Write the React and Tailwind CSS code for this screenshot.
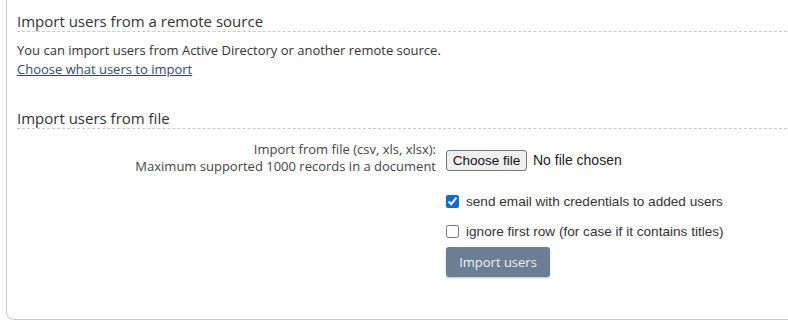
import React, { useState } from "react";

const App = () => {
  const [sendEmail, setSendEmail] = useState(true);
  const [ignoreFirst, setIgnoreFirst] = useState(false);
  const [fileName, setFileName] = useState("");

  return (
    <div
      className="h-[330px] w-[788px] overflow-hidden bg-white text-[#333]"
      style={{ fontFamily: '"Open Sans", sans-serif' }}
    >
      <div className="ml-[6px] mr-[-20px] mt-[-10px] h-[330px] rounded-b-[8px] border border-[#c8c8c8] pl-[10px] pt-[20px]">
        <h3 className="border-b border-dashed border-[#c8c8c8] text-[15px] leading-[20px] text-[#333]">
          Import users from a remote source
        </h3>
        <div className="mt-[9px] text-[13px] leading-[19px]">
          <p>You can import users from Active Directory or another remote source.</p>
          <a href="#" className="text-[#34496a] underline">
            Choose what users to import
          </a>
        </div>

        <h3 className="mt-[29px] border-b border-dashed border-[#c8c8c8] text-[15px] leading-[20px] text-[#333]">
          Import users from file
        </h3>
        <div className="mt-[12px] flex gap-[10px]">
          <div className="w-[419px] text-right text-[13px] leading-[17px] text-[#444]">
            <div>Import from file (csv, xls, xlsx):</div>
            <div>Maximum supported 1000 records in a document</div>
          </div>
          <div
            className="flex flex-col items-start text-[13.6px] leading-[17px] text-[#333]"
            style={{ fontFamily: '"Liberation Sans", Arial, sans-serif' }}
          >
            <label className="mt-[9px] flex h-[21px] cursor-pointer items-center">
              <input
                type="file"
                className="hidden"
                onChange={(e) => setFileName(e.target.files[0]?.name || "")}
              />
              <span className="flex h-[21px] w-[81px] items-center justify-center rounded-[3px] border border-[#767676] bg-[#efefef] text-[13.5px] text-[#111]">
                Choose file
              </span>
              <span className="ml-[6px] text-[14px] text-[#222]">
                {fileName || "No file chosen"}
              </span>
            </label>
            <label className="mt-[22px] flex items-center gap-[7px]">
              <input
                type="checkbox"
                checked={sendEmail}
                onChange={(e) => setSendEmail(e.target.checked)}
                className="h-[13px] w-[13px] accent-[#0a6cdc]"
              />
              send email with credentials to added users
            </label>
            <label className="mt-[13px] flex items-center gap-[7px]">
              <input
                type="checkbox"
                checked={ignoreFirst}
                onChange={(e) => setIgnoreFirst(e.target.checked)}
                className="h-[13px] w-[13px]"
              />
              ignore first row (for case if it contains titles)
            </label>
            <button
              type="button"
              className="mt-[7px] h-[30px] w-[104px] rounded-[3px] bg-[#6b7e93] text-[13px] text-[#eef1f4] shadow-[0_1px_2px_rgba(0,0,0,0.25)]"
              style={{ fontFamily: '"Open Sans", sans-serif' }}
            >
              Import users
            </button>
          </div>
        </div>
      </div>
    </div>
  );
};

export default App;
